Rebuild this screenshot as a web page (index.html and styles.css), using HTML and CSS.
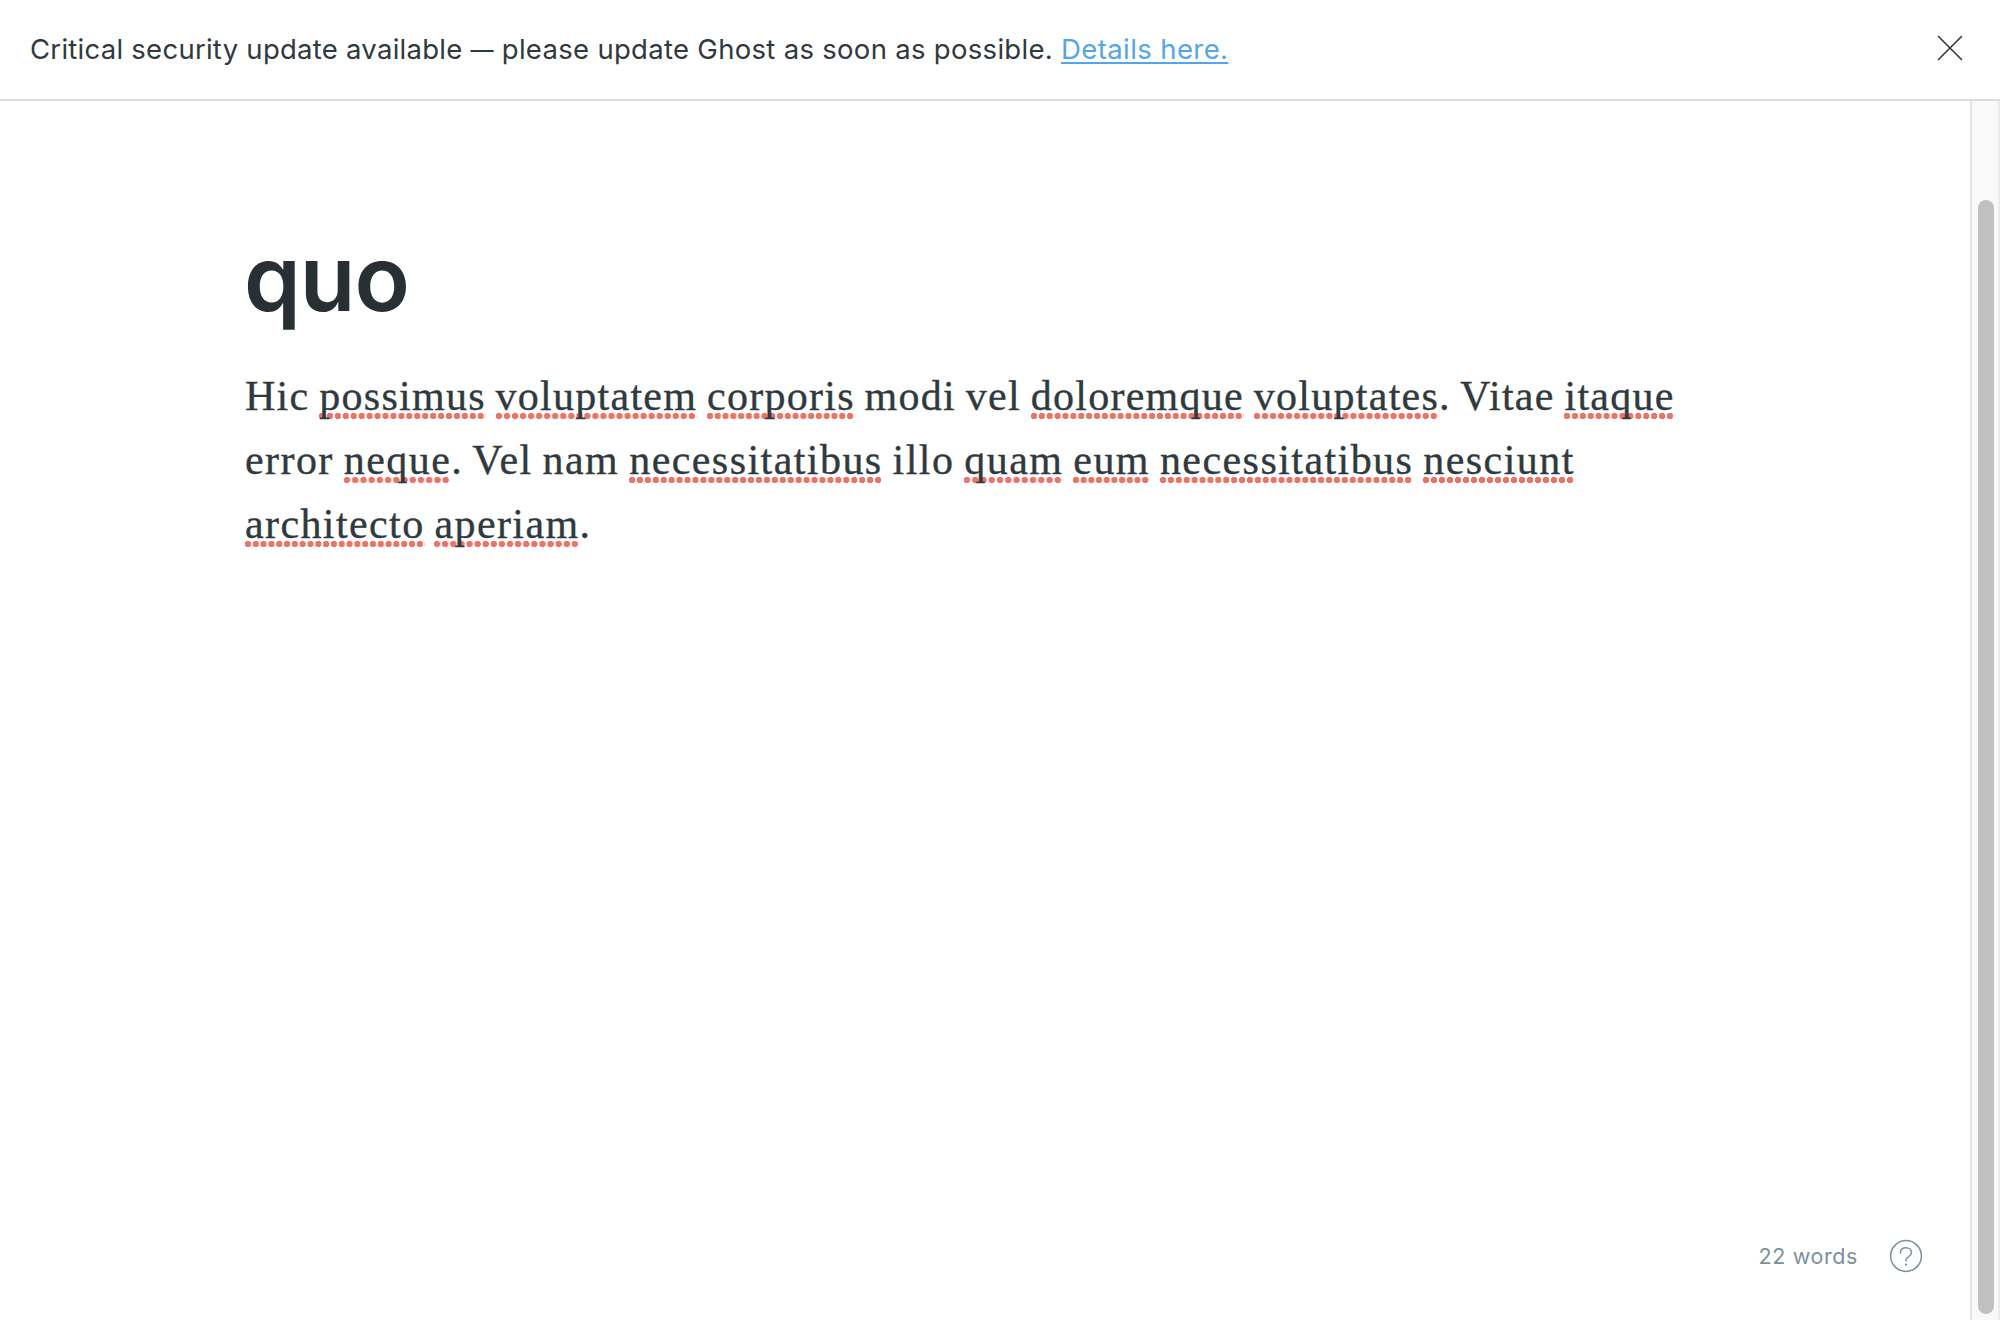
FILE: index.html
```html
<!DOCTYPE html>
<html lang="en">
<head>
<meta charset="utf-8">
<title>Editor</title>
<link rel="stylesheet" href="styles.css">
</head>
<body>
<header class="alert">
  <p class="alert-text">Critical security update available <span class="dash">—</span> <span class="alert-action">please update Ghost as soon as possible.</span> <a class="alert-link" href="#">Details here.</a></p>
  <button class="alert-close" aria-label="Close">
    <svg width="26" height="26" viewBox="0 0 26 26" fill="none" stroke="#303a3e" stroke-width="1.6" stroke-linecap="round"><path d="M1.5 1.5 24.5 24.5M24.5 1.5 1.5 24.5"/></svg>
  </button>
</header>
<div class="workspace">
  <main class="editor">
    <article class="post">
      <h1 class="title">quo</h1>
      <p class="body"><span class="line">Hic <span class="typo">possimus</span> <span class="typo">voluptatem</span> <span class="typo">corporis</span> modi vel <span class="typo">doloremque</span> <span class="typo">voluptates</span>. Vitae <span class="typo">itaque</span></span> <span class="line line-wide">error <span class="typo">neque</span>. Vel nam <span class="typo">necessitatibus</span> illo <span class="typo">quam</span> <span class="typo">eum</span> <span class="typo">necessitatibus</span> <span class="typo">nesciunt</span></span> <span class="line line-last"><span class="typo">architecto</span> <span class="typo">aperiam</span>.</span></p>
    </article>
    <footer class="status">
      <span class="count">22 words</span>
      <svg class="help" width="34" height="34" viewBox="0 0 34 34" fill="none" stroke="#7c909c" stroke-width="1.5" stroke-linecap="round"><circle cx="17" cy="17" r="15.4"/><path d="M11.5 14V13.6C11.5 10.6 13.9 8.8 17 8.8S22.5 10.8 22.5 13.8C22.5 17.6 17 17.8 17 20.6V22"/><circle cx="17" cy="25.6" r="1.1" fill="#7c909c" stroke="none"/></svg>
    </footer>
  </main>
  <div class="scrollbar"><div class="thumb"></div></div>
</div>
</body>
</html>
```
FILE: styles.css
```css
* { box-sizing: border-box; }
body {
  margin: 0;
  height: 1320px;
  display: flex;
  flex-direction: column;
  overflow: hidden;
  background: #fff;
  color: #303a3e;
  font-family: Inter, "Liberation Sans", sans-serif;
}
.alert {
  height: 101px;
  flex: none;
  display: flex;
  justify-content: space-between;
  align-items: center;
  padding: 0 37px 4px 30px;
  border-bottom: 2px solid #dadcdc;
}
.alert-text { margin: 3px 0 0; font-size: 27.5px; line-height: 40px; letter-spacing: 0.26px; white-space: nowrap; }
.dash { font-size: 23px; line-height: 1; vertical-align: 1px; }
.alert-action { letter-spacing: 0.3px; }
.alert-link {
  letter-spacing: 0.4px;
  color: #54a6ea;
  text-decoration: underline;
  text-decoration-thickness: 2px;
  text-underline-offset: 3px;
  text-decoration-skip-ink: none;
}
.alert-close { display: flex; padding: 0; border: 0; background: none; }
.workspace { flex: 1; display: flex; min-height: 0; }
.editor { flex: 1; display: flex; flex-direction: column; justify-content: space-between; }
.post { padding: 122px 0 0 244px; }
.title {
  margin: 0;
  font-size: 91px;
  line-height: 110px;
  font-weight: 600;
  letter-spacing: -1px;
  color: #283033;
}
.body {
  margin: 31px 0 0 1px;
  font-family: Georgia, "Liberation Serif", serif;
  font-size: 42px;
  line-height: 64px;
  letter-spacing: 1.27px;
  word-spacing: -2px;
  white-space: nowrap;
  -webkit-text-stroke: 0.35px currentColor;
}
.line { display: block; }
.line-wide { letter-spacing: 1.44px; }
.line-last { letter-spacing: 1.4px; }
.typo {
  padding-bottom: 1px;
  background: radial-gradient(circle at 3px 3px, #ef7268 2.9px, transparent 3.5px) 0 calc(100% - 1px) / 8px 6px round no-repeat;
}
.status {
  display: flex;
  justify-content: flex-end;
  align-items: center;
  gap: 31px;
  padding: 0 47px 47px 0;
  color: #7c909c;
}
.count { font-size: 21.5px; line-height: 32px; letter-spacing: 0.6px; }
.help { display: block; }
.scrollbar {
  width: 30px;
  padding: 99px 0 6px 6px;
  background: #f9f9f9;
  border-left: 2px solid #e5e5e5;
  border-right: 2px solid #ebebeb;
}
.thumb { width: 16px; height: 100%; border-radius: 8px; background: #c0c0c0; }
```
